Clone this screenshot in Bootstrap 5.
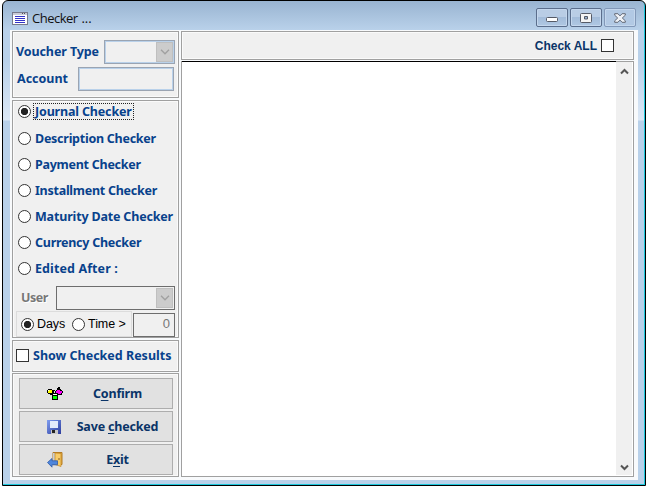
<!DOCTYPE html>
<html lang="en">
<head>
<meta charset="utf-8">
<title>Checker ...</title>
<link href="https://cdn.jsdelivr.net/npm/bootstrap@5.3.0/dist/css/bootstrap.min.css" rel="stylesheet">
<style>
body{background:#fff;width:647px;height:487px;overflow:hidden;font:bold 12.5px/16px "Noto Sans","Open Sans",sans-serif;color:#08428c}
.win{width:644px;height:486px;margin-left:2px;border:1px solid #000;border-radius:6px 6px 0 0;background:linear-gradient(#99b4d1 0,#b9d1ea 29px,#b9d1ea 60px,#dce8f6 119px,#b9d1ea 120px);box-shadow:inset -1px -1px #1cc8dc}
.titlebar{height:29px;padding:7px 9px 0 9px}
.caption{font:13px/20px "Open Sans","Noto Sans",sans-serif;color:#111;margin-left:4px;letter-spacing:-.5px;word-spacing:1px}
.caption b{font-weight:400;letter-spacing:-.1px}
.winbtn{width:32px;height:19px;border:1px solid #5b6e8c;border-radius:2px;box-shadow:inset 0 0 0 1px #c4d7ed;background:linear-gradient(#b9cde5 0 45%,#a2bbd9 46%,#b0c8e3)}
.winbtn.dim{border-color:#8298b8;background:#b2c9e4}
.client{width:628px;height:450px;margin-left:7px;padding:1px 4px 3px 2px;background:#f8fafc;gap:2px}
.side{width:167px;gap:2px}
.pane{border:1px solid #a0a0a0;background:#f0f0f0;box-shadow:inset 0 0 0 1px #fafafa}
.p1{height:68px;padding:8px 3px 0 3px}
.p2{height:239px;padding:0 3px}
.p3{height:32px;padding:0 3px 1px}
.p3 .box{margin-bottom:1px}
.p3 span{padding-top:1px}
.p4{height:105px;padding:4px 5px 0 6px;gap:2px;margin-top:-1px}
.t-v{letter-spacing:-.1px}
.t-a{padding-left:1px}
.field{border:1px solid #9aa4b2;box-shadow:inset 0 0 0 1px #b9d1ea;background:#f0f0f0;height:24px;width:97px}
.field.dark{border-color:#6d6d6d;box-shadow:none}
.combo{padding:1px}
.arrow{width:17px;height:20px;background:#ccc;border:1px solid #bfbfbf}
.dot{width:13px;height:13px;border:1px solid #333;border-radius:50%;background:#fff;flex:none}
.dot.on{background:radial-gradient(circle,#222 0 3.3px,#fff 4px)}
.box{width:13px;height:13px;border:1px solid #333;background:#fff;flex:none}
.opt{height:26px;padding-left:2px;padding-bottom:1px;gap:4px}
.opt span{white-space:nowrap;letter-spacing:-.26px;padding-top:1px}
.opt.first{height:25px;padding-bottom:4px;gap:2px}
.opt .focus{outline:1px dotted #222;outline-offset:-1px;padding:0 2px;height:17px;line-height:17px;letter-spacing:-.16px}
.userlbl{color:#777;text-shadow:1px 1px #fff;width:40px;padding-left:5px;letter-spacing:-.5px}
.days{width:116px;height:26px;border:1px solid #dcdcdc;font:12.5px/16px "Liberation Sans",sans-serif;color:#000;padding-left:4px;white-space:nowrap;letter-spacing:-.1px}
.field.num{width:42px;font:13px/20px "Liberation Sans",sans-serif;color:#777;padding-right:4px}
.cmd{height:31px;border:1px solid #adadad;background:#e1e1e1;border-radius:0;color:#0a3468;font:inherit;padding:0 0 0 27px}
.cmd span{width:112px;text-align:center;letter-spacing:-.18px}
.cmd u{text-underline-offset:2px}
.head{height:29px;padding-right:19px;gap:4px;color:#0a3468;font:bold 12px/16px "Liberation Sans",sans-serif}
.list{height:416px;border:1px solid #a0a0a0;background:#fff;padding:0 1px 1px 0}
.listbody{border-top:1px solid #000;margin-top:-1px}
.scroll{width:16px;background:#f0f0f0;padding:6px 0 4px}
svg{display:block;flex:none}
</style>
<script src="https://cdn.jsdelivr.net/npm/bootstrap@5.3.0/dist/js/bootstrap.bundle.min.js"></script>
</head>
<body>
<div class="win">
 <div class="titlebar d-flex">
  <svg class="mt-1" width="16" height="14" shape-rendering="crispEdges"><path d="M.5.5h15v12H.5z" fill="#fff" stroke="#777a8c"/><path d="M1 1h14v2H1z" fill="#c9ccd8"/><path d="M10 1h1v1h-1zM12 1h1v1h-1z" fill="#555"/><path d="M3 4h10v1H3zM3 6h10v1H3zM3 8h10v1H3zM3 10h10v1H3z" fill="#3434c8"/></svg>
  <span class="caption">Checker <b>...</b></span>
  <div class="d-flex ms-auto" style="gap:2px">
   <div class="winbtn d-flex align-items-center justify-content-center"><svg width="12" height="14"><rect x=".5" y="6.500" width="11" height="4" rx="1" fill="#fff" stroke="#555a66"/></svg></div>
   <div class="winbtn d-flex align-items-center justify-content-center"><svg width="12" height="10"><rect x=".5" y=".5" width="11" height="9" rx="1" fill="#f4f4f4" stroke="#555a66"/><path d="M4.500 3.500h3v2.500h-3z" fill="#9ab4d4" stroke="#555a66"/></svg></div>
   <div class="winbtn dim d-flex align-items-center justify-content-center"><svg width="12" height="10"><path d="M.7.7h3.200L6 2.900 8.100.7h3.200v1.500L8.300 5l3 2.800v1.500H8.100L6 7.100 3.900 9.300H.7V7.800l3-2.800-3-2.800z" fill="#eef1f6" stroke="#626875"/></svg></div>
  </div>
 </div>
 <main class="client d-flex">
  <div class="side d-flex flex-column">
   <section class="pane p1">
    <div class="d-flex justify-content-between align-items-center"><span class="t-v">Voucher Type</span><div class="field combo d-flex justify-content-end" style="width:71px"><div class="arrow d-flex align-items-center justify-content-center"><svg width="10" height="6"><path d="M1 .8l4 4 4-4" fill="none" stroke="#a0a0a0" stroke-width="1.300"/></svg></div></div></div>
    <div class="d-flex justify-content-between align-items-center" style="margin:3px 1px 0 0"><span class="t-a">Account</span><div class="field" style="width:96px"></div></div>
   </section>
   <section class="pane p2">
    <div class="opt first d-flex align-items-center"><i class="dot on"></i><span class="focus">Journal Checker</span></div>
    <div class="opt d-flex align-items-center"><i class="dot"></i><span>Description Checker</span></div>
    <div class="opt d-flex align-items-center"><i class="dot"></i><span>Payment Checker</span></div>
    <div class="opt d-flex align-items-center"><i class="dot"></i><span>Installment Checker</span></div>
    <div class="opt d-flex align-items-center"><i class="dot"></i><span style="letter-spacing:-.17px">Maturity Date Checker</span></div>
    <div class="opt d-flex align-items-center"><i class="dot"></i><span>Currency Checker</span></div>
    <div class="opt d-flex align-items-center"><i class="dot"></i><span style="letter-spacing:.1px">Edited After :</span></div>
    <div class="d-flex align-items-center" style="margin-top:4px"><span class="userlbl">User</span><div class="field dark combo d-flex justify-content-end flex-fill"><div class="arrow d-flex align-items-center justify-content-center"><svg width="10" height="6"><path d="M1 .8l4 4 4-4" fill="none" stroke="#a0a0a0" stroke-width="1.300"/></svg></div></div></div>
    <div class="d-flex align-items-end justify-content-between" style="margin-top:1px"><div class="days d-flex align-items-center"><i class="dot on"></i><span style="margin:0 7px 0 3px">Days</span><i class="dot"></i><span style="margin-left:3px">Time &gt;</span></div><div class="field dark num text-end">0</div></div>
   </section>
   <section class="pane p3 d-flex align-items-center"><i class="box"></i><span class="ms-1">Show Checked Results</span></section>
   <section class="pane p4 d-flex flex-column">
    <button class="cmd d-flex align-items-center"><svg width="16" height="14" shape-rendering="crispEdges"><path d="M1 2h4v1h1v3H5v1H1V6H0V3h1zM10 1h1V0h2v2h1v1h1v1h1v2h-1v2h-5V7H9V6H8V4h1V3h1zM6 3h2v1H7v2h5v1h-1v6H5V7H4V6h2zM5 7H3v1h2z" fill="#000"/><path d="M1 3h4v3H1z" fill="#ff0"/><path d="M1 3h1v1H1z" fill="#fff"/><path d="M10 3h3v1h2v2h-1v1h-3V6H9V4h1z" fill="#f0f"/><path d="M6 7h4v1H6z" fill="#fff"/><path d="M6 9h4v3H6z" fill="#0f0"/></svg><span>C<u>o</u>nfirm</span></button>
    <button class="cmd d-flex align-items-center"><svg width="16" height="14"><defs><linearGradient id="g" x2="1" y2="1"><stop stop-color="#7f9df0"/><stop offset="1" stop-color="#2c3c9c"/></linearGradient></defs><path d="M0 0h14v14H1L0 13z" fill="url(#g)"/><path d="M3 1h8v7H3z" fill="#e4ebfb"/><path d="M4 10h7v4H4z" fill="#c8c8c8"/><path d="M5 10h3v3H5z" fill="#222"/></svg><span>Save <u>c</u>hecked</span></button>
    <button class="cmd d-flex align-items-center"><svg width="16" height="16"><path d="M6 .5h9v12H6z" fill="#e9b54b" stroke="#b47c24"/><path d="M6 1h3v11H6z" fill="#c9cdd2"/><path d="M8 1l6 .5v13L8 12.500z" fill="#f8cc68" stroke="#c08424" stroke-width=".7"/><circle cx="12" cy="7" r=".8" fill="#775011"/><path d="M.5 10.500L5 6.500v2.300h5.500v4H5v2.400z" fill="#4f86dc" stroke="#2e5ba8" stroke-width=".8"/></svg><span>E<u>x</u>it</span></button>
   </section>
  </div>
  <div class="flex-fill d-flex flex-column" style="gap:1px">
   <div class="pane head d-flex align-items-center justify-content-end"><span>Check ALL</span><i class="box"></i></div>
   <div class="list d-flex"><div class="listbody flex-fill"></div><div class="scroll d-flex flex-column justify-content-between align-items-center"><svg width="9" height="7"><path d="M1 5.500L4.500 2 8 5.500" fill="none" stroke="#555" stroke-width="2"/></svg><svg width="9" height="7"><path d="M1 1.500L4.500 5 8 1.500" fill="none" stroke="#555" stroke-width="2"/></svg></div></div>
  </div>
 </main>
</div>
</body>
</html>
